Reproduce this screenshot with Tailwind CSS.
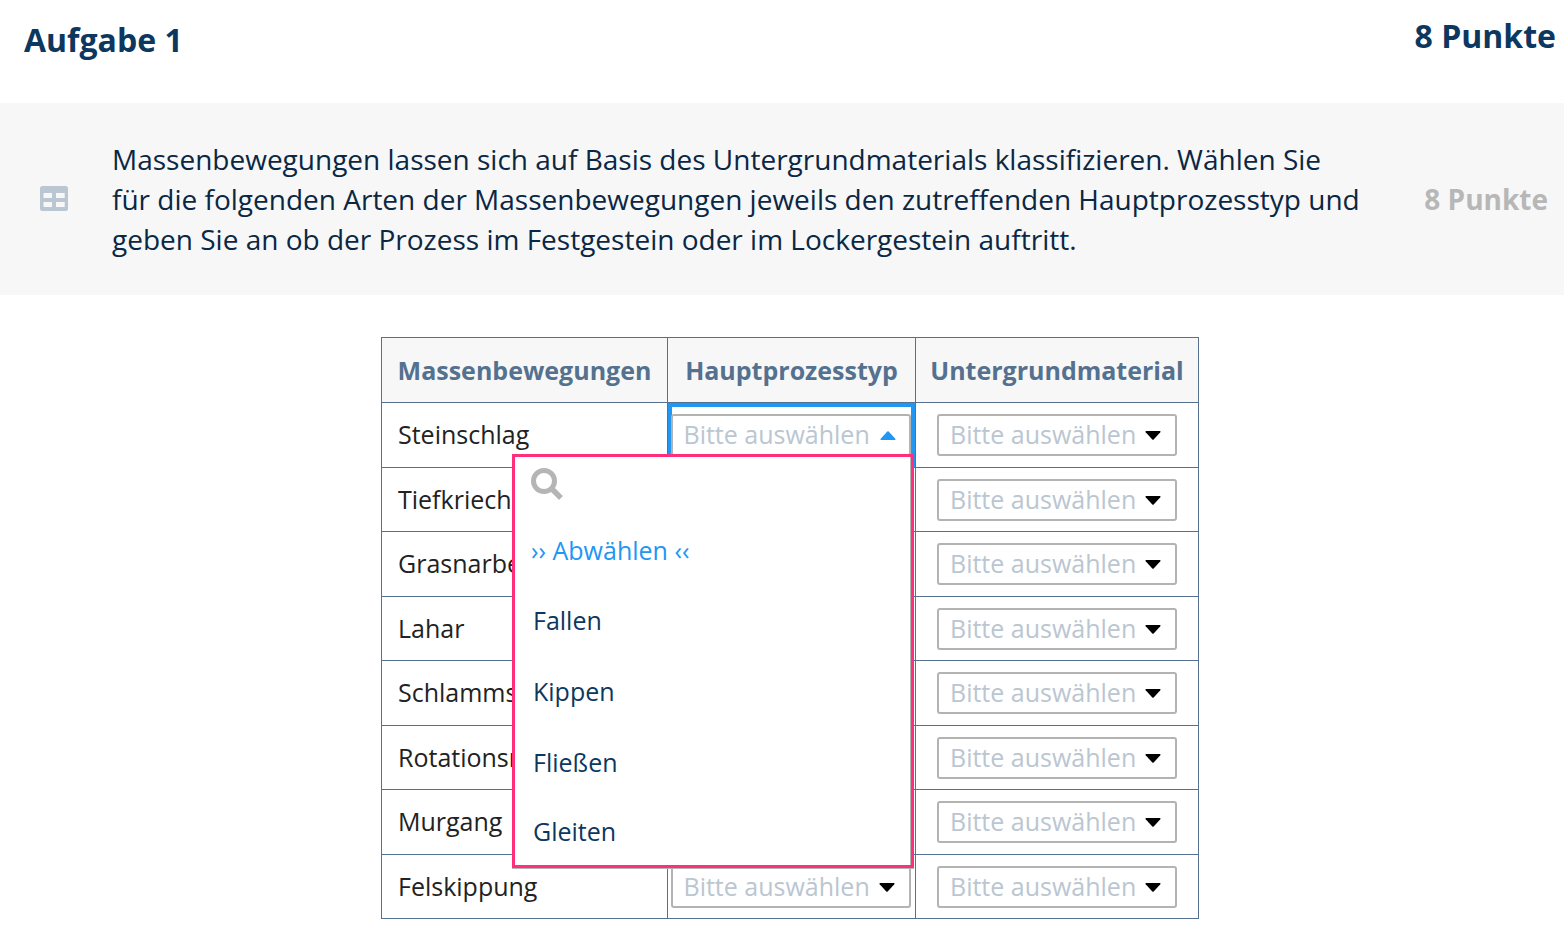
<!DOCTYPE html>
<html lang="de">
<head>
<meta charset="utf-8">
<meta name="viewport" content="width=device-width, initial-scale=1">
<title>Aufgabe 1</title>
<script src="https://cdn.jsdelivr.net/npm/@tailwindcss/browser@4"></script>
</head>
<body class="bg-white font-['Open_Sans',sans-serif] text-[#0a2744]">
<header class="flex h-[103px] items-start justify-between pt-4 pr-2 pl-6 text-[#0c375e]">
  <h1 class="pt-1 text-[32px] leading-10 font-bold">Aufgabe 1</h1>
  <p class="text-[32px] leading-10 font-bold">8 Punkte</p>
</header>

<section class="flex min-h-[192px] items-center bg-[#f7f7f7] pr-4 pl-10">
  <svg class="mr-11 h-[26px] w-7 shrink-0" viewBox="0 0 28 26" fill="#bac6d1" aria-hidden="true">
    <path fill-rule="evenodd" d="M2.500 0h23A2.500 2.500 0 0 1 28 2.500v20a2.500 2.500 0 0 1-2.500 2.500h-23A2.500 2.500 0 0 1 0 22.500v-20A2.500 2.500 0 0 1 2.500 0ZM3.500 7v5h8.500v-5ZM16 7v5h8.700v-5ZM3.500 16v5h8.500v-5ZM16 16v5h8.700v-5Z"/>
  </svg>
  <p class="flex-1 pr-12 text-[28px] leading-10">Massenbewegungen lassen sich auf Basis des Untergrundmaterials klassifizieren. Wählen Sie<br>für die folgenden Arten der Massenbewegungen jeweils den zutreffenden Hauptprozesstyp und<br>geben Sie an ob der Prozess im Festgestein oder im Lockergestein auftritt.</p>
  <p class="shrink-0 text-[28px] leading-10 font-bold text-[#b7b7b7]">8 Punkte</p>
</section>

<main class="flex justify-center pt-[42px] pl-4">
  <table class="table-fixed border-collapse text-[25px] leading-8">
    <colgroup><col class="w-[286px]"><col class="w-[248px]"><col class="w-[283px]"></colgroup>
    <thead>
      <tr class="h-[65px] bg-[#f7f7f7] text-[#54718f]">
        <th scope="col" class="border border-[#54718f] p-0 font-bold">Massenbewegungen</th>
        <th scope="col" class="border border-[#54718f] p-0 font-bold">Hauptprozesstyp</th>
        <th scope="col" class="border border-[#54718f] p-0 font-bold">Untergrundmaterial</th>
      </tr>
    </thead>
    <tbody id="rows">
      <tr class="h-[65px]">
        <th scope="row" class="border border-[#54718f] p-0 pb-0.5 pl-4 text-left font-normal text-[#222]">Steinschlag</th>
        <td class="relative border border-[#54718f] p-0">
          <div class="flex h-16 items-center justify-center border-4 border-b-0 border-[#2196f3] pr-0.5 pb-1">
            <button type="button" aria-haspopup="listbox" aria-expanded="true" aria-controls="choices" class="-mx-1 flex h-[42px] w-[240px] shrink-0 items-center justify-between rounded-[3px] border-2 border-[#b3b3b3] bg-white pr-[13px] pl-[11px] text-[#bac6d1]">
              <span class="pb-0.5">Bitte auswählen</span>
              <svg class="h-[9px] w-4" viewBox="0 0 16 9" fill="#2196f3" aria-hidden="true"><path d="M7.300.5 Q8-.2 8.700.5L15.300 7.700Q16 9 15 9H1Q0 9 .7 7.700Z"/></svg>
            </button>
          </div>
          <div class="absolute top-[51px] right-px z-10 w-[402px] border-[3px] border-[#ff2f7b] bg-white shadow-[0_1px_0_#b3b3b3,inset_-1px_0_0_#b3b3b3]">
            <label class="flex h-[58px] items-center pb-1 pl-4">
              <svg class="h-8 w-8 shrink-0" viewBox="0 0 32 32" fill="none" stroke="#b5b5b5" aria-hidden="true"><circle cx="13" cy="13" r="10.500" stroke-width="5"/><path d="M20.500 20.500L30 30" stroke-width="5.500"/></svg>
              <input type="search" aria-label="Suchen" class="ml-2 h-10 w-[300px] bg-transparent outline-none">
            </label>
            <ul id="choices" role="listbox" aria-label="Hauptprozesstyp" class="text-[#0c375e]">
              <li role="option" class="flex h-[70px] items-center pl-4 text-[#2196f3]">›› Abwählen ‹‹</li>
              <li role="option" class="flex h-[70px] items-center pl-[18px]">Fallen</li>
              <li role="option" class="flex h-[71px] items-center pl-[18px]">Kippen</li>
              <li role="option" class="flex h-[71px] items-center pl-[18px]">Fließen</li>
              <li role="option" class="flex h-[68px] items-center pl-[18px]">Gleiten</li>
            </ul>
          </div>
        </td>
        <td class="border border-[#54718f] p-0"></td>
      </tr>
    </tbody>
  </table>
</main>

<template id="picker">
  <div class="relative mx-auto h-[42px] w-[240px]">
    <select class="h-[42px] w-full appearance-none rounded-[3px] border-2 border-[#b3b3b3] bg-white pr-8 pb-0.5 pl-[11px] text-[#bac6d1]">
      <option>Bitte auswählen</option>
    </select>
    <svg class="pointer-events-none absolute top-[17px] right-4 h-[9px] w-4" viewBox="0 0 16 9" fill="#000" aria-hidden="true"><path d="M7.300 8.500Q8 9.200 8.700 8.500L15.300 1.300Q16 0 15 0H1Q0 0 .7 1.300Z"/></svg>
  </div>
</template>

<script>
  const body = document.getElementById('rows');
  const picker = document.getElementById('picker');
  const addPicker = (cell, label) => {
    const node = picker.content.cloneNode(true);
    node.querySelector('select').setAttribute('aria-label', label);
    cell.append(node);
  };
  addPicker(body.rows[0].cells[2], 'Untergrundmaterial: Steinschlag');
  ['Tiefkrieche', 'Grasnarbe', 'Lahar', 'Schlamms', 'Rotationsr', 'Murgang', 'Felskippung'].forEach((name, i) => {
    const row = body.insertRow();
    row.className = i % 2 ? 'h-[65px]' : 'h-[64px]';
    const head = document.createElement('th');
    head.scope = 'row';
    head.className = 'border border-[#54718f] p-0 pb-0.5 pl-4 text-left font-normal text-[#222]';
    head.textContent = name;
    row.append(head);
    for (const column of ['Hauptprozesstyp', 'Untergrundmaterial']) {
      const cell = row.insertCell();
      cell.className = column === 'Hauptprozesstyp' ? 'border border-[#54718f] p-0 pr-0.5' : 'border border-[#54718f] p-0';
      addPicker(cell, column + ': ' + name);
    }
  });
</script>
</body>
</html>
